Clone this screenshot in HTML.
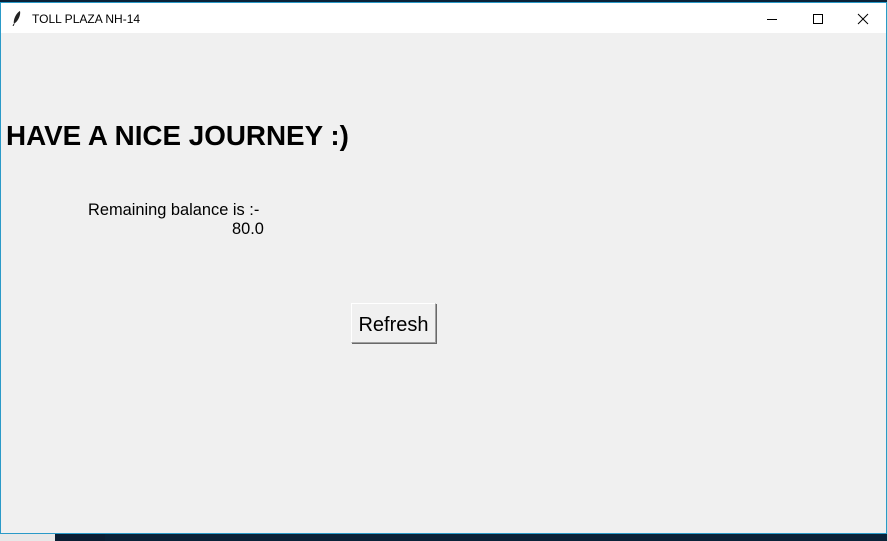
<!DOCTYPE html>
<html><head><style>
html,body{margin:0;padding:0;width:888px;height:541px;overflow:hidden;background:#0a2238;font-family:"Liberation Sans",sans-serif;}
.bg1{position:absolute;left:0;top:534px;width:55px;height:7px;background:#e8e8e8;}
.bg2{position:absolute;left:55px;top:534px;width:50px;height:7px;background:#0b1e33;}
.bg3{position:absolute;left:887px;top:0;width:1px;height:541px;background:#d8d8d8;}
.win{position:absolute;left:0;top:2px;width:885px;height:530px;border:1px solid #2a9ac8;background:#f0f0f0;}
.title{position:absolute;left:0;top:0;width:885px;height:30px;background:#fff;}
.ttext{position:absolute;left:31px;top:9px;font-size:12px;color:#000;}
.h{position:absolute;left:5px;top:117px;font-size:27.8px;font-weight:bold;color:#000;white-space:nowrap;}
.t{position:absolute;font-size:16.4px;color:#000;white-space:nowrap;}
.btn{position:absolute;left:350px;top:300px;width:83px;height:38px;background:#f0f0f0;border:1px solid #fff;border-right-color:#a0a0a0;border-bottom-color:#a0a0a0;box-shadow:1px 1px 0 #696969;font-size:20px;text-align:center;line-height:42px;}
</style></head><body>
<div class="bg1"></div><div class="bg2"></div><div class="bg3"></div>
<div class="win">
<div class="title">
<svg style="position:absolute;left:11px;top:7px" width="10" height="16" viewBox="0 0 10 16"><path d="M2 14 C1 10 4 3 8 1 C9 5 6 11 3 13 Z" fill="#222"/><path d="M2 14 L1 16" stroke="#222"/></svg>
<div class="ttext">TOLL PLAZA NH-14</div>
<svg style="position:absolute;left:764px;top:8px" width="110" height="16" viewBox="0 0 110 16">
<line x1="2" y1="8.5" x2="12" y2="8.5" stroke="#000"/>
<rect x="48.5" y="3.5" width="9" height="9" fill="none" stroke="#000"/>
<path d="M93 3 L103 13 M103 3 L93 13" stroke="#000"/>
</svg>
</div>
<div class="h">HAVE A NICE JOURNEY :)</div>
<div class="t" style="left:87px;top:198px">Remaining balance is :-</div>
<div class="t" style="left:231px;top:217px">80.0</div>
<div class="btn">Refresh</div>
</div>
</body></html>
